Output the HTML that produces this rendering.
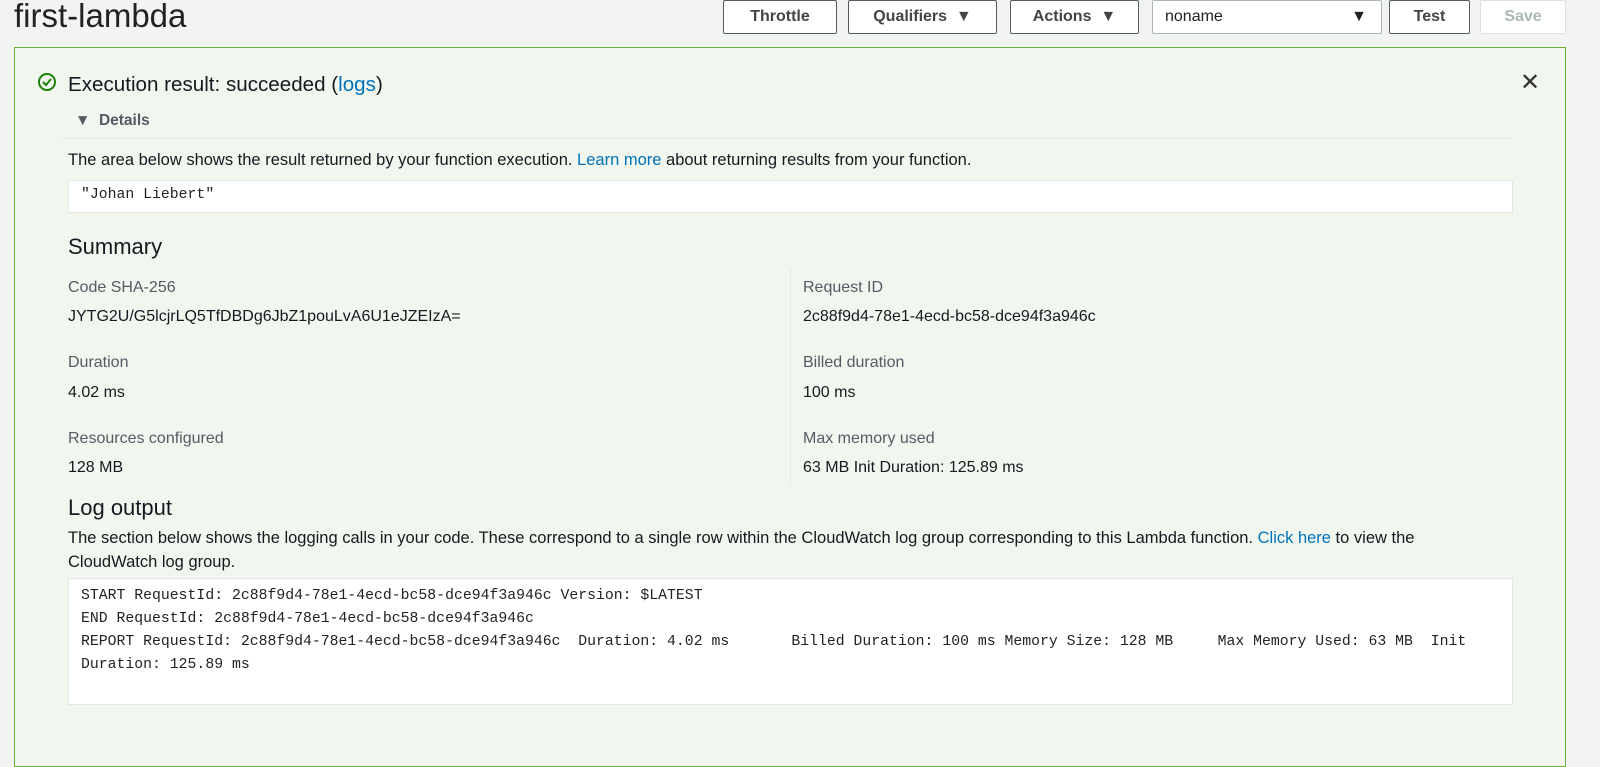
<!DOCTYPE html>
<html><head><meta charset="utf-8"><style>
body{margin:0;width:1600px;height:740px;overflow:hidden;background:#f2f3f3;font-family:"Liberation Sans",sans-serif;color:#16191f;position:relative}
.a{position:absolute;white-space:nowrap}
.btn{position:absolute;top:0;height:34px;border:1px solid #545b64;border-radius:2px;background:#fff;font-weight:bold;font-size:16px;color:#444;display:flex;align-items:center;justify-content:center;box-sizing:border-box}
.panel{position:absolute;left:14px;top:47px;width:1552px;height:720px;border:1px solid #6aaf35;background:#f1f7ef;box-sizing:border-box}
.box{position:absolute;background:#fff;border:1px solid #e4e8e4;box-sizing:border-box;font-family:"Liberation Mono",monospace;font-size:14.8px;color:#222}
.lbl{font-size:16px;color:#545b64}
.val{font-size:16px;color:#16191f}
a{color:#0073bb;text-decoration:none}
</style></head><body>
<div class="a" style="left:14px;top:-3px;font-size:33px;color:#222">first-lambda</div>
<div class="btn" style="left:723px;width:114px">Throttle</div>
<div class="btn" style="left:848px;width:149px">Qualifiers&nbsp;&nbsp;▼</div>
<div class="btn" style="left:1010px;width:129px">Actions&nbsp;&nbsp;▼</div>
<div class="btn" style="left:1152px;width:230px;justify-content:space-between;padding:0 14px 0 12px;font-weight:normal;color:#222;border-color:#aab7b8"><span>noname</span><span>▼</span></div>
<div class="btn" style="left:1389px;width:81px">Test</div>
<div class="btn" style="left:1480px;width:86px;color:#aab7b8;border-color:#e0e0e0">Save</div>
<div class="panel"></div>
<svg class="a" style="left:37px;top:72px" width="20" height="20" viewBox="0 0 20 20"><circle cx="10" cy="10" r="8" fill="none" stroke="#1d8102" stroke-width="2"/><path d="M6 10l3 3 5-6" fill="none" stroke="#1d8102" stroke-width="2"/></svg>
<div class="a" style="left:68px;top:73px;font-size:20.6px">Execution result: succeeded (<a>logs</a>)</div>
<div class="a" style="left:1520px;top:68px;font-size:24px;color:#333">✕</div>
<div class="a" style="left:75px;top:112px;font-size:15.5px;font-weight:bold;color:#545b64">▼&nbsp; Details</div>
<div class="a" style="left:62px;top:138px;width:1450px;height:1px;background:#e4e8e4"></div>
<div class="a" style="left:68px;top:151px;font-size:16.5px">The area below shows the result returned by your function execution. <a>Learn more</a> about returning results from your function.</div>
<div class="box" style="left:68px;top:180px;width:1445px;height:33px;padding:6px 12px">"Johan Liebert"</div>
<div class="a" style="left:68px;top:234px;font-size:22px">Summary</div>
<div class="a" style="left:790px;top:268px;width:1px;height:215px;background:#e4e8e4"></div>
<div class="a lbl" style="left:68px;top:279px">Code SHA-256</div>
<div class="a val" style="left:68px;top:308px">JYTG2U/G5lcjrLQ5TfDBDg6JbZ1pouLvA6U1eJZEIzA=</div>
<div class="a lbl" style="left:68px;top:354px">Duration</div>
<div class="a val" style="left:68px;top:384px">4.02 ms</div>
<div class="a lbl" style="left:68px;top:430px">Resources configured</div>
<div class="a val" style="left:68px;top:459px">128 MB</div>
<div class="a lbl" style="left:803px;top:279px">Request ID</div>
<div class="a val" style="left:803px;top:308px">2c88f9d4-78e1-4ecd-bc58-dce94f3a946c</div>
<div class="a lbl" style="left:803px;top:354px">Billed duration</div>
<div class="a val" style="left:803px;top:384px">100 ms</div>
<div class="a lbl" style="left:803px;top:430px">Max memory used</div>
<div class="a val" style="left:803px;top:459px">63 MB Init Duration: 125.89 ms</div>
<div class="a" style="left:68px;top:495px;font-size:22px">Log output</div>
<div class="a" style="left:68px;top:526px;font-size:16.5px;line-height:24px;white-space:normal;width:1400px">The section below shows the logging calls in your code. These correspond to a single row within the CloudWatch log group corresponding to this Lambda function. <a>Click here</a> to view the CloudWatch log group.</div>
<div class="box" style="left:68px;top:578px;width:1445px;height:127px;padding:6px 12px;line-height:23px;white-space:pre">START RequestId: 2c88f9d4-78e1-4ecd-bc58-dce94f3a946c Version: $LATEST
END RequestId: 2c88f9d4-78e1-4ecd-bc58-dce94f3a946c
REPORT RequestId: 2c88f9d4-78e1-4ecd-bc58-dce94f3a946c  Duration: 4.02 ms       Billed Duration: 100 ms Memory Size: 128 MB     Max Memory Used: 63 MB  Init 
Duration: 125.89 ms</div>
</body></html>
